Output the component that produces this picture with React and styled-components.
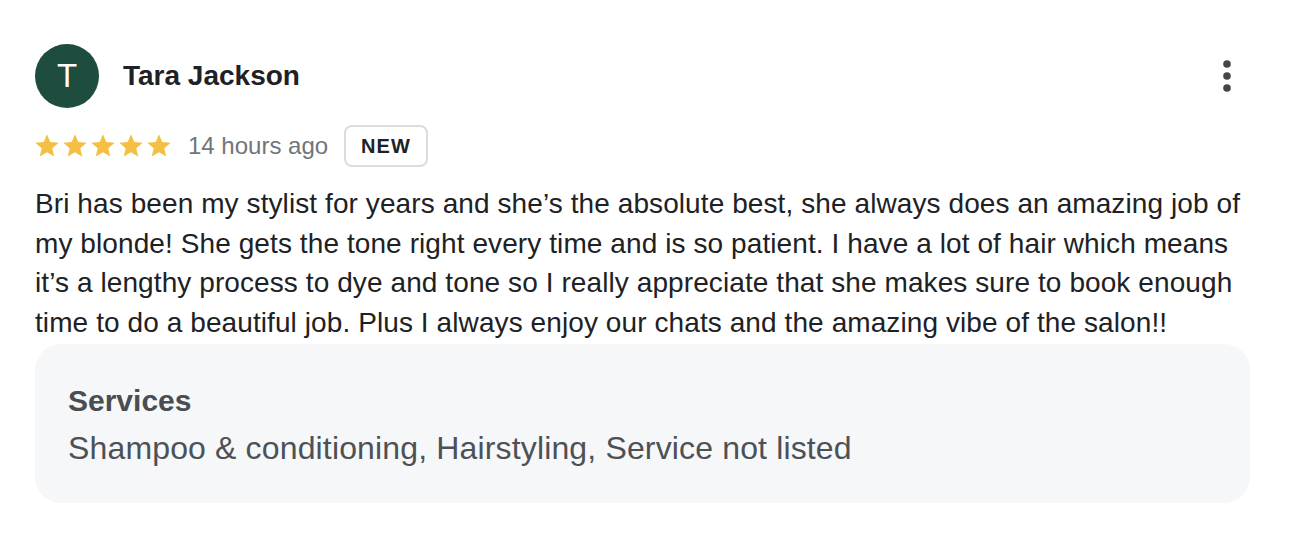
import React from 'react'
import styled, { createGlobalStyle } from 'styled-components'

const GlobalStyle = createGlobalStyle`
  html, body {
    margin: 0;
    padding: 0;
    background: #ffffff;
  }
  body {
    font-family: "Liberation Sans", Arial, Helvetica, sans-serif;
    color: #202124;
  }
`

const Card = styled.div`
  width: 1215px;
  padding: 44px 0 40px 35px;
`

const Header = styled.div`
  display: flex;
  align-items: center;
  height: 64px;
`

const Avatar = styled.div`
  width: 64px;
  height: 64px;
  border-radius: 50%;
  background: ${(p) => p.color};
  color: #ffffff;
  display: flex;
  align-items: center;
  justify-content: center;
  font-size: 33px;
  font-weight: 400;
  flex-shrink: 0;
`

const Name = styled.div`
  margin-left: 24px;
  font-size: 28px;
  font-weight: 700;
  color: #202124;
  flex: 1;
`

const MenuButton = styled.button`
  width: 48px;
  height: 48px;
  border: none;
  background: transparent;
  padding: 0;
  display: flex;
  align-items: center;
  justify-content: center;
  margin-right: -1px;
  cursor: pointer;
`

const MetaRow = styled.div`
  display: flex;
  align-items: center;
  height: 42px;
  margin-top: 17px;
`

const Stars = styled.div`
  display: flex;
  margin-left: -2px;
`

const Ago = styled.span`
  margin-left: 15px;
  font-size: 24px;
  color: #70757a;
`

const Badge = styled.span`
  margin-left: 16px;
  height: 38px;
  line-height: 38px;
  padding: 0 15px;
  border: 2px solid #dadce0;
  border-radius: 8px;
  font-size: 20px;
  font-weight: 700;
  letter-spacing: 1px;
  color: #202124;
`

const ReviewText = styled.p`
  margin: 17px 0 0;
  font-size: 28px;
  line-height: 39.5px;
  letter-spacing: 0.09px;
  color: #202124;
`

const ServicesBox = styled.div`
  margin-top: 2px;
  background: #f6f7f9;
  border-radius: 26px;
  padding: 38px 32px 33px 33px;
  display: flex;
  flex-direction: column;
  gap: 6px;
`

const ServicesTitle = styled.div`
  font-size: 30px;
  line-height: 38px;
  font-weight: 700;
  color: #4a4d52;
`

const ServicesList = styled.div`
  font-size: 32px;
  line-height: 44px;
  letter-spacing: 0.15px;
  color: #4d5156;
`

function Star() {
  return (
    <svg width="28" height="28" viewBox="0 0 24 24">
      <path
        fill="#f4bf42"
        d="M12 17.27L18.18 21l-1.64-7.03L22 9.24l-7.19-.61L12 2 9.19 8.63 2 9.24l5.46 4.73L5.82 21z"
      />
    </svg>
  )
}

function MoreIcon() {
  return (
    <svg width="48" height="48" viewBox="0 0 24 24">
      <circle cx="12" cy="6" r="1.9" fill="#444746" />
      <circle cx="12" cy="12" r="1.9" fill="#444746" />
      <circle cx="12" cy="18" r="1.9" fill="#444746" />
    </svg>
  )
}

export default function App() {
  return (
    <>
      <GlobalStyle />
      <Card>
        <Header>
          <Avatar color="#1e4c3f">T</Avatar>
          <Name>Tara Jackson</Name>
          <MenuButton aria-label="More options">
            <MoreIcon />
          </MenuButton>
        </Header>
        <MetaRow>
          <Stars>
            {[0, 1, 2, 3, 4].map((i) => (
              <Star key={i} />
            ))}
          </Stars>
          <Ago>14 hours ago</Ago>
          <Badge>NEW</Badge>
        </MetaRow>
        <ReviewText>
          Bri has been my stylist for years and she’s the absolute best, she always does an amazing job of
          my blonde! She gets the tone right every time and is so patient. I have a lot of hair which means
          it’s a lengthy process to dye and tone so I really appreciate that she makes sure to book enough
          time to do a beautiful job. Plus I always enjoy our chats and the amazing vibe of the salon!!
        </ReviewText>
        <ServicesBox>
          <ServicesTitle>Services</ServicesTitle>
          <ServicesList>Shampoo &amp; conditioning, Hairstyling, Service not listed</ServicesList>
        </ServicesBox>
      </Card>
    </>
  )
}
